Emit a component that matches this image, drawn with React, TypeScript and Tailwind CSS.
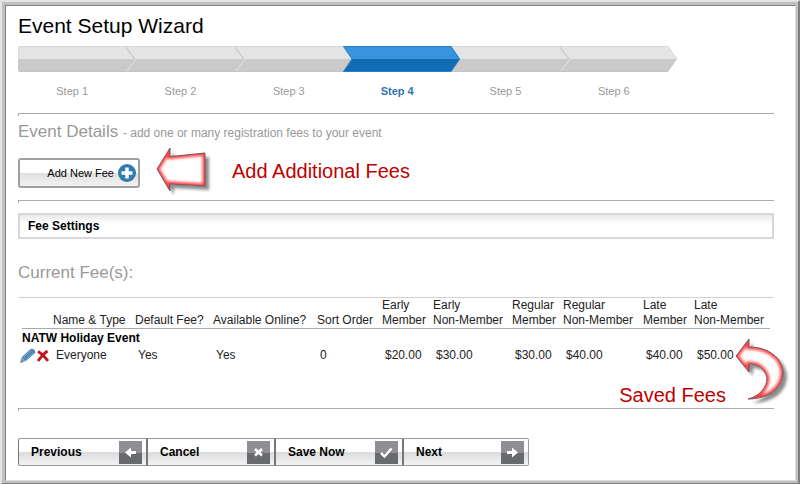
import type { ReactNode } from "react";

interface FeeColumn {
  line1?: string;
  label: string;
  value: string;
  width: string;
}

const steps = ["Step 1", "Step 2", "Step 3", "Step 4", "Step 5", "Step 6"];
const activeStep = 3;

const columns: FeeColumn[] = [
  { label: "Name & Type", value: "Everyone", width: "w-[82px]" },
  { label: "Default Fee?", value: "Yes", width: "w-[78px]" },
  { label: "Available Online?", value: "Yes", width: "w-[104px]" },
  { label: "Sort Order", value: "0", width: "w-[65px]" },
  { line1: "Early", label: "Member", value: "$20.00", width: "w-[51px]" },
  { line1: "Early", label: "Non-Member", value: "$30.00", width: "w-[79px]" },
  { line1: "Regular", label: "Member", value: "$30.00", width: "w-[51px]" },
  { line1: "Regular", label: "Non-Member", value: "$40.00", width: "w-[80px]" },
  { line1: "Late", label: "Member", value: "$40.00", width: "w-[51px]" },
  { line1: "Late", label: "Non-Member", value: "$50.00", width: "w-auto" },
];

const leftArrow = "M1 22L14 1V9.500L49 6V39L14 37V44Z";
const curvedArrow = "M2 19L15 2V10C35 10 48 21 49 35C49 50 36 62 14 62C26 59 33 50 33 41C31 32 24 27 15 27V35Z";

function Divider() {
  return <hr className="h-[3px] border-0 border-t border-l border-[#a9a9a9]" />;
}

function StepBar() {
  return (
    <div className="mt-2">
      <svg viewBox="0 0 660 26" className="block h-[26px] w-[660px]" aria-hidden="true">
        <path d="M2 0H650L659 13H0V2Q0 0 2 0Z" fill="#e4e4e4" />
        <path d="M0 13H659L650 26H2Q0 26 0 24Z" fill="#cacaca" />
        <path d="M0 13V2Q0 .5 2 .5H650L659 13" fill="none" stroke="#d6d6d6" />
        <path d="M2 25.500H650" stroke="#c0c6ca" />
        {[108, 217, 542].map((x) => (
          <g key={x} transform={`translate(${x} 0)`} fill="none">
            <path d="M0 1L9 13" stroke="#d0d0d0" strokeWidth="2" />
            <path d="M2 1L11 13" stroke="#ececec" />
            <path d="M10 13L1 25" stroke="#e2e2e2" />
          </g>
        ))}
        <path d="M325 0H433L442 13H334Z" fill="#3993dd" />
        <path d="M334 13H442L433 26H325Z" fill="#126cb4" />
        <path d="M325.500 .5H433L441.500 13L433 25.500H325.500L334 13Z" fill="none" stroke="#2480ca" />
      </svg>
      <ol className="mt-3 grid w-[650px] grid-cols-6 text-center text-[11px] leading-[14px] text-[#999]">
        {steps.map((step, idx) => (
          <li
            key={step}
            aria-current={idx === activeStep ? "step" : undefined}
            className={idx === activeStep ? "font-bold text-[#2f76ad]" : ""}
          >
            {step}
          </li>
        ))}
      </ol>
    </div>
  );
}

function PlusIcon() {
  return (
    <svg viewBox="0 0 18 18" className="size-[18px]" aria-hidden="true">
      <circle cx="9" cy="9" r="9" fill="#2f7cb2" />
      <path d="M9 3.500V14.500M3.500 9H14.500" stroke="#fff" strokeWidth="3.500" />
    </svg>
  );
}

function PencilIcon() {
  return (
    <svg viewBox="0 0 16 15" className="block h-[15px] w-4" aria-hidden="true">
      <path d="M1 13.500L2 9L10 1.500Q12 0 14 1.500Q16 3.500 14.500 5.500L6 13Z" fill="#4d86b4" />
      <path d="M3.500 9.500L11 2.500M5.500 12L13.500 5" stroke="#86add0" />
      <path d="M0 15L1.500 10L5 13.500Z" fill="#5c8fae" />
      <path d="M2 10.500L4.500 13" stroke="#d5e3ed" />
    </svg>
  );
}

function DeleteIcon() {
  return (
    <svg viewBox="0 0 12 12" className="block size-3" aria-hidden="true">
      <path d="M1 1.500Q5 3.500 11 11M10.500 1Q6 4 1 11" fill="none" stroke="#c4141b" strokeWidth="2.800" />
    </svg>
  );
}

function Callout({ id, shape, className, viewBox }: { id: string; shape: string; className: string; viewBox: string }) {
  return (
    <svg viewBox={viewBox} className={`block ${className}`} aria-hidden="true">
      <defs>
        <filter id={`${id}-shadow`} x="-20%" y="-20%" width="150%" height="150%">
          <feDropShadow dx="4" dy="4" stdDeviation="1.500" floodColor="#000" floodOpacity=".45" />
        </filter>
        <filter id={`${id}-glow`} x="-20%" y="-20%" width="140%" height="140%">
          <feGaussianBlur stdDeviation="1.500" />
        </filter>
        <clipPath id={`${id}-clip`}>
          <path d={shape} />
        </clipPath>
      </defs>
      <path d={shape} fill="#fff" filter={`url(#${id}-shadow)`} />
      <g clipPath={`url(#${id}-clip)`}>
        <path d={shape} fill="none" stroke="#ff4040" strokeWidth="5" filter={`url(#${id}-glow)`} />
      </g>
      <path d={shape} fill="none" stroke="#6d4a56" strokeWidth=".9" />
    </svg>
  );
}

function NavButton({ label, children }: { label: string; children: ReactNode }) {
  return (
    <button
      type="button"
      className="flex h-7 w-32 items-center justify-between border-y border-l-2 border-[#9a9a9a] border-l-[#777] bg-linear-to-b from-white from-50% via-[#d9dbdd] via-50% to-[#f3f3f3] pr-1 pl-3 text-[12px] font-bold first:rounded-l-xs first:border-l last:w-[127px] last:rounded-r-xs last:border-r"
    >
      {label}
      <svg viewBox="0 0 23 23" className="size-[23px]" aria-hidden="true">
        <path d="M0 0H23V11.500H0Z" fill="#8e8f92" />
        <path d="M0 11.500H23V23H0Z" fill="#696a6e" />
        {children}
      </svg>
    </button>
  );
}

export default function App() {
  return (
    <div className="border-2 border-[#e4e4e4] border-r-[#808080] border-b-[#808080] bg-white font-['Liberation_Sans',Arial,sans-serif] text-black">
      <div className="border-t-3 border-r-2 border-b-2 border-l-3 border-[#c0c0c0]">
        <main className="border border-[#808080] border-r-[#dfdfdf] border-b-[#dfdfdf] pt-2 pr-[21px] pb-3.5 pl-3">
          <h1 className="text-[21px] leading-6">Event Setup Wizard</h1>
          <StepBar />

          <div className="mt-[15px]">
            <Divider />
          </div>
          <h2 className="mt-1.5 text-[17px] leading-5 text-[#999]">
            Event Details <span className="text-[12px]">- add one or many registration fees to your event</span>
          </h2>

          <div className="mt-1 mb-px flex items-center">
            <button
              type="button"
              className="flex h-[30px] w-[122px] items-center justify-end gap-1 rounded-[3px] border-2 border-[#a0a0a0] bg-linear-to-b from-white from-50% via-[#dfdfdf] via-50% to-[#f3f3f3] pr-0.5 text-[11px]"
            >
              Add New Fee
              <PlusIcon />
            </button>
            <div className="ml-4 flex items-center">
              <Callout id="add" shape={leftArrow} viewBox="0 0 60 52" className="h-[52px] w-[60px]" />
              <p className="mb-1 ml-4 text-[20px] leading-6 text-[#c00000]">Add Additional Fees</p>
            </div>
          </div>

          <Divider />
          <h2 className="mt-2.5 border-2 border-[#d8d8d8] bg-linear-to-b from-[#e9e9e9] to-white to-40% px-2 text-[12px] leading-[22px] font-bold">
            Fee Settings
          </h2>

          <h2 className="mt-6 mb-3.5 text-[17px] leading-5 text-[#999]">Current Fee(s):</h2>
          <div className="relative border-t border-[#d0d0d0] pr-1 pl-1">
            <table className="w-full table-fixed border-separate border-spacing-0 text-left text-[12px] leading-[15px] text-[#222]">
              <thead>
                <tr className="align-bottom">
                  <td className="w-[31px] border-b border-[#a9a9a9]" />
                  {columns.map((col, idx) => (
                    <th
                      key={idx}
                      scope="col"
                      className={`${col.width} border-b border-[#a9a9a9] font-normal whitespace-nowrap`}
                    >
                      {col.line1 && <span className="block">{col.line1}</span>}
                      {col.label}
                    </th>
                  ))}
                </tr>
              </thead>
              <tbody>
                <tr>
                  <th colSpan={11} scope="rowgroup" className="pt-0.5 text-black">
                    NATW Holiday Event
                  </th>
                </tr>
                <tr>
                  <td className="pt-0.5">
                    <div className="-ml-0.5 flex items-center gap-px">
                      <button type="button" aria-label="Edit">
                        <PencilIcon />
                      </button>
                      <button type="button" aria-label="Delete">
                        <DeleteIcon />
                      </button>
                    </div>
                  </td>
                  {columns.map((col, idx) => (
                    <td key={idx} className="pt-0.5 pl-[3px]">
                      {col.value}
                    </td>
                  ))}
                </tr>
              </tbody>
            </table>
            <div className="absolute -right-5 -bottom-[50px]">
              <Callout id="saved" shape={curvedArrow} viewBox="0 0 60 76" className="h-[76px] w-[60px]" />
            </div>
          </div>

          <p className="mt-5 mr-12 mb-px text-right text-[20px] leading-6 text-[#c00000]">Saved Fees</p>
          <Divider />

          <nav className="mt-[27px] flex">
            <NavButton label="Previous">
              <path d="M6 11.500L12 6.500V10H17V13H12V16.500Z" fill="#fff" />
            </NavButton>
            <NavButton label="Cancel">
              <path d="M8 8L15 14.500M15 8L8 14.500" stroke="#fff" strokeWidth="2.500" />
            </NavButton>
            <NavButton label="Save Now">
              <path d="M6 12L9.500 15.500L16.500 7.500" fill="none" stroke="#fff" strokeWidth="2.500" />
            </NavButton>
            <NavButton label="Next">
              <path d="M17 11.500L11 6.500V10H6V13H11V16.500Z" fill="#fff" />
            </NavButton>
          </nav>
        </main>
      </div>
    </div>
  );
}
